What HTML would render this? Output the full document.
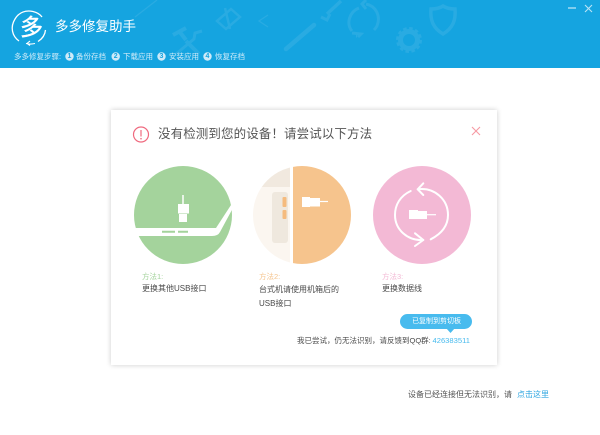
<!DOCTYPE html>
<html><head><meta charset="utf-8"><style>
*{margin:0;padding:0;box-sizing:border-box}
html,body{width:600px;height:435px;overflow:hidden;background:#fff}
body{position:relative;font-family:"Liberation Sans","Noto Sans CJK SC",sans-serif;color:#4a4a4a}
.t{position:absolute;white-space:nowrap;line-height:1}
#hd{position:absolute;left:0;top:0;width:600px;height:68px;background:#15a4e0}
#card{position:absolute;left:111px;top:110px;width:386px;height:255px;background:#fff;box-shadow:0 0 5px rgba(0,0,0,.2)}
svg{position:absolute;left:0;top:0}
</style></head><body>
<div id="hd"></div>
<div id="card"></div>
<svg width="600" height="435" viewBox="0 0 600 435" fill="none">
<!-- bg icons -->
<g stroke="#29abe2" fill="none">
<path d="M135 17L157 0" stroke-width="1.300"/>
<path d="M217 21l14-12 9 8-14 12zM225 8l5 21" stroke-width="2.500"/>
<path d="M268 15l-9 6 9 6" stroke-width="1.300"/>
<path d="M186 41L199 54" stroke-width="4"/><path d="M173 35l13-7M179 31l7 9" stroke-width="4"/>
<path d="M202 31l-7 2-1 6-18 15" stroke-width="3"/>
<path d="M286 49L314 25" stroke-width="4.500" stroke-linecap="round"/>
<path d="M341 1L327 14" stroke-width="3.500"/><path d="M321 17l6 3 3-6" stroke-width="3"/>
<path d="M359 8C349 12 346 24 352 31M356 36l1 0M366 4c10 2 15 12 11 22-1 2-2 3-3 4M366 0l-4 4 4 5M352 33l9 1-3 3" stroke-width="3"/>
<circle cx="409" cy="40" r="8.500" stroke-width="5"/><circle cx="409" cy="40" r="11.500" stroke-width="3" stroke-dasharray="3.500 2.500"/>
<path d="M431 9c5 0 9-1 12-3 3 2 7 3 12 3 1 11-2 19-12 25-10-6-13-14-12-25z" stroke-width="3.500"/>
</g>
<!-- logo -->
<path d="M19 41C12 36 10 27 15 19 19 12 26 10 33 11.500 37 12.500 40 14 42 17" stroke="#fff" stroke-width="1.300"/>
<path d="M45.500 30C45 35 42 39 38 41.500" stroke="#fff" stroke-width="1.300"/>
<path d="M26 43.500c3 .7 6 .7 9 0M30 41l-3 2.500 3 2" stroke="#fff" stroke-width="1.100"/>
<!-- min close -->
<path d="M568 8h8" stroke="#b9e3f6" stroke-width="1.300"/>
<path d="M585 5l7 7M592 5l-7 7" stroke="#b9e3f6" stroke-width="1.100"/>
<!-- step bubbles -->
<g fill="#cfeaf8"><circle cx="69.500" cy="56.500" r="4.200"/><circle cx="115.700" cy="56.500" r="4.200"/><circle cx="161.500" cy="56.500" r="4.200"/><circle cx="207.500" cy="56.500" r="4.200"/></g>
<!-- warning -->
<circle cx="141" cy="134.500" r="7.500" stroke="#ef6a7f" stroke-width="1.200"/>
<path d="M141 130v6.500" stroke="#ef6a7f" stroke-width="1.200"/><circle cx="141" cy="138.700" r=".8" fill="#ef6a7f"/>
<!-- close -->
<path d="M472 127l8 8M480 127l-8 8" stroke="#f79aa3" stroke-width="1.100"/>
<!-- circle 1 -->
<defs><clipPath id="c2"><circle cx="302" cy="215" r="49"/></clipPath></defs>
<circle cx="183" cy="215" r="49" fill="#a4d39c"/>
<path d="M134 228H216L231 205 233.500 207 220 232Q218 236 212 236H134Z" fill="#fff"/>
<path d="M162 231.700h13M178 231.700h10" stroke="#a4d39c" stroke-width="2"/>
<path d="M183 195v9" stroke="#fff" stroke-width="1.500"/>
<rect x="178" y="204" width="11" height="9.500" fill="#fff"/>
<rect x="179" y="214" width="8" height="8" fill="#fff"/>
<!-- circle 2 -->
<g clip-path="url(#c2)">
<rect x="253" y="166" width="37" height="98" fill="#fbf6f0"/>
<rect x="253" y="166" width="37" height="21" fill="#f1e9df"/>
<rect x="293" y="166" width="60" height="98" fill="#f6c48d"/>
</g>
<rect x="272" y="192" width="16" height="51" rx="3" fill="#efe8de"/>
<rect x="282.500" y="197" width="4" height="10" rx="1" fill="#f5bb7e"/>
<rect x="282.500" y="210" width="4" height="9" rx="1" fill="#f5bb7e"/>
<rect x="302" y="197" width="8" height="10" fill="#fff"/>
<rect x="310" y="198" width="10" height="8.500" fill="#fff"/>
<path d="M320 201.500h8" stroke="#fff" stroke-width="1.200"/>
<!-- circle 3 -->
<circle cx="422" cy="215" r="49" fill="#f3b9d5"/>
<g stroke="#fff" stroke-width="2" stroke-linecap="round" stroke-linejoin="round">
<path d="M417.700 189.300C435 187 448 200 448 215 448 226 441 234 430.700 239.300"/>
<path d="M410.700 191C400 196 395 205 395 215 395 230 408 241 423.300 240"/>
<path d="M423.300 183.300l-5.600 6 5.600 5.700"/>
<path d="M415 233.300l8.300 6.700-8.300 6"/>
</g>
<rect x="409" y="210" width="9" height="9" fill="#fff"/>
<rect x="418" y="211" width="9" height="8" fill="#fff"/>
<path d="M427 214.700h9" stroke="#fff" stroke-width="1.200"/>
<!-- tooltip -->
<rect x="400" y="314" width="72" height="15" rx="7.500" fill="#48bbee"/>
<path d="M446 328h9l-4.500 5z" fill="#48bbee"/>
</svg>
<div class="t" style="left:55px;top:20px;font-size:13.500px;color:#fff">多多修复助手</div>
<div class="t" style="left:20px;top:16px;font-size:23px;color:#fff;-webkit-text-stroke:.4px #fff">多</div>
<div class="t" style="left:14px;top:53px;font-size:7.500px;color:#d2ecf9">多多修复步骤:</div>
<div class="t" style="left:76px;top:53px;font-size:7.500px;color:#d2ecf9">备份存档</div>
<div class="t" style="left:123px;top:53px;font-size:7.500px;color:#d2ecf9">下载应用</div>
<div class="t" style="left:169px;top:53px;font-size:7.500px;color:#d2ecf9">安装应用</div>
<div class="t" style="left:215px;top:53px;font-size:7.500px;color:#d2ecf9">恢复存档</div>
<div class="t" style="left:67.500px;top:53px;font-size:7px;color:#15a4e0;font-weight:700">1</div>
<div class="t" style="left:113.700px;top:53px;font-size:7px;color:#15a4e0;font-weight:700">2</div>
<div class="t" style="left:159.500px;top:53px;font-size:7px;color:#15a4e0;font-weight:700">3</div>
<div class="t" style="left:205.500px;top:53px;font-size:7px;color:#15a4e0;font-weight:700">4</div>
<div class="t" style="left:158px;top:128px;font-size:12.500px;color:#555;letter-spacing:.1px">没有检测到您的设备！请尝试以下方法</div>
<div class="t" style="left:142px;top:273px;font-size:7.500px;color:#a4d39c">方法1:</div>
<div class="t" style="left:142px;top:285px;font-size:8px">更换其他USB接口</div>
<div class="t" style="left:259px;top:273px;font-size:7.500px;color:#f6c48d">方法2:</div>
<div class="t" style="left:259px;top:286px;font-size:8px">台式机请使用机箱后的</div>
<div class="t" style="left:259px;top:300px;font-size:8px">USB接口</div>
<div class="t" style="left:382px;top:273px;font-size:7.500px;color:#f3b9d5">方法3:</div>
<div class="t" style="left:382px;top:285px;font-size:8px">更换数据线</div>
<div class="t" style="left:412px;top:318px;font-size:7px;color:#fff">已复制到剪切板</div>
<div class="t" style="left:297px;top:337px;font-size:7.500px">我已尝试，仍无法识别，请反馈到QQ群:</div>
<div class="t" style="left:432.500px;top:337px;font-size:7.600px;color:#48bbee">426383511</div>
<div class="t" style="left:408px;top:391px;font-size:8px;color:#555">设备已经连接但无法识别，请</div>
<div class="t" style="left:517px;top:391px;font-size:8px;color:#2fa6e0">点击这里</div>
</body></html>
